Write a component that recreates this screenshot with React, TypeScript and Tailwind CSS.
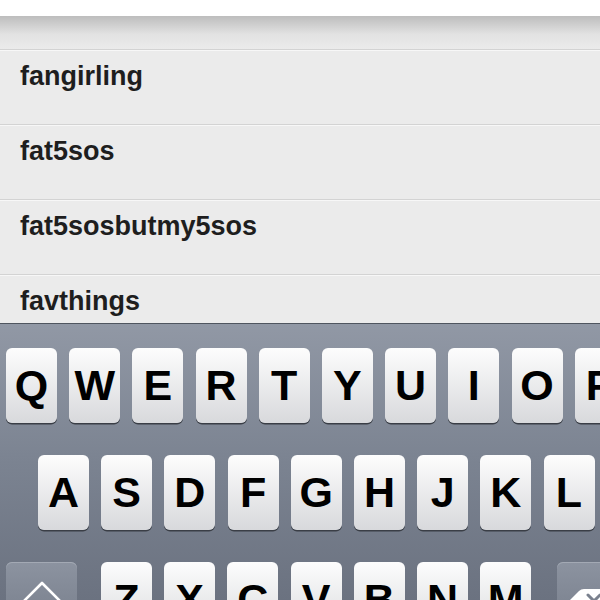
const tags = ['fangirling', 'fat5sos', 'fat5sosbutmy5sos', 'favthings'];

const rowOne = ['Q', 'W', 'E', 'R', 'T', 'Y', 'U', 'I', 'O', 'P'];
const rowTwo = ['A', 'S', 'D', 'F', 'G', 'H', 'J', 'K', 'L'];
const rowThree = ['Z', 'X', 'C', 'V', 'B', 'N', 'M'];

const Key = ({ label }: { label: string }) => (
  <div className="w-[51px] h-[75px] shrink-0 rounded-[6px] bg-gradient-to-b from-[#fdfdfd] to-[#d8d9dc] shadow-[0_1.5px_0.5px_#3a3e46] flex items-center justify-center text-[43px] font-bold text-black leading-none">
    {label}
  </div>
);

const App = () => {
  return (
    <div className="w-[600px] h-[600px] overflow-hidden bg-[#ebebeb] font-['Liberation_Sans',Arial,sans-serif]">
      {/* search bar edge */}
      <div className="h-[16px] bg-white" />
      <div className="h-[307px] overflow-hidden">
        <div className="h-[33px] bg-gradient-to-b from-[#bdbdbd] via-[#e2e2e2] via-55% to-[#ebebeb]" />
        {tags.map((tag) => (
          <div
            key={tag}
            className="h-[75px] shrink-0 border-t border-[#d3d3d3] shadow-[inset_0_1px_0_#f7f7f7] pl-[20px] pt-[10px]"
          >
            <p className="text-[27px] leading-[32px] font-bold text-[#1e1e1e]">{tag}</p>
          </div>
        ))}
      </div>

      {/* keyboard */}
      <div className="h-[277px] border-t border-[#4f555f] bg-gradient-to-b from-[#9198a5] via-[#7b8391] to-[#6b7280] flex flex-col gap-[32px] pt-[24px]">
        <div className="flex gap-[12.2px] pl-[6px]">
          {rowOne.map((k) => (
            <Key key={k} label={k} />
          ))}
        </div>
        <div className="flex gap-[12.2px] pl-[38px]">
          {rowTwo.map((k) => (
            <Key key={k} label={k} />
          ))}
        </div>
        <div className="flex pl-[6px]">
          <div className="w-[71px] h-[75px] shrink-0 rounded-[6px] bg-gradient-to-b from-[#8c93a0] to-[#747b88] shadow-[inset_0_1px_0_#a3a9b4,0_1.5px_0.5px_#3a3e46] flex justify-center pt-[19px]">
            <svg width="44" height="40" viewBox="0 0 44 40" fill="none">
              <path
                d="M22 2 L41 21 L31 21 L31 38 L13 38 L13 21 L3 21 Z"
                stroke="white"
                strokeWidth="2.6"
                strokeLinejoin="round"
              />
            </svg>
          </div>
          <div className="flex gap-[12.2px] ml-[24px]">
            {rowThree.map((k) => (
              <Key key={k} label={k} />
            ))}
          </div>
          <div className="w-[71px] h-[75px] shrink-0 ml-[26px] rounded-[6px] bg-gradient-to-b from-[#8c93a0] to-[#747b88] shadow-[inset_0_1px_0_#a3a9b4,0_1.5px_0.5px_#3a3e46] pl-[3px] pt-[27px]">
            <svg width="50" height="40" viewBox="0 0 50 40">
              <path d="M0 21 L19 2 Q21 0 24 0 L46 0 Q50 0 50 4 L50 38 Q50 42 46 42 L24 42 Q21 42 19 40 Z" fill="white" />
              <path d="M28 6 L40 18 M40 6 L28 18" stroke="#7a818e" strokeWidth="3" strokeLinecap="round" />
            </svg>
          </div>
        </div>
      </div>
    </div>
  );
};

export default App;
